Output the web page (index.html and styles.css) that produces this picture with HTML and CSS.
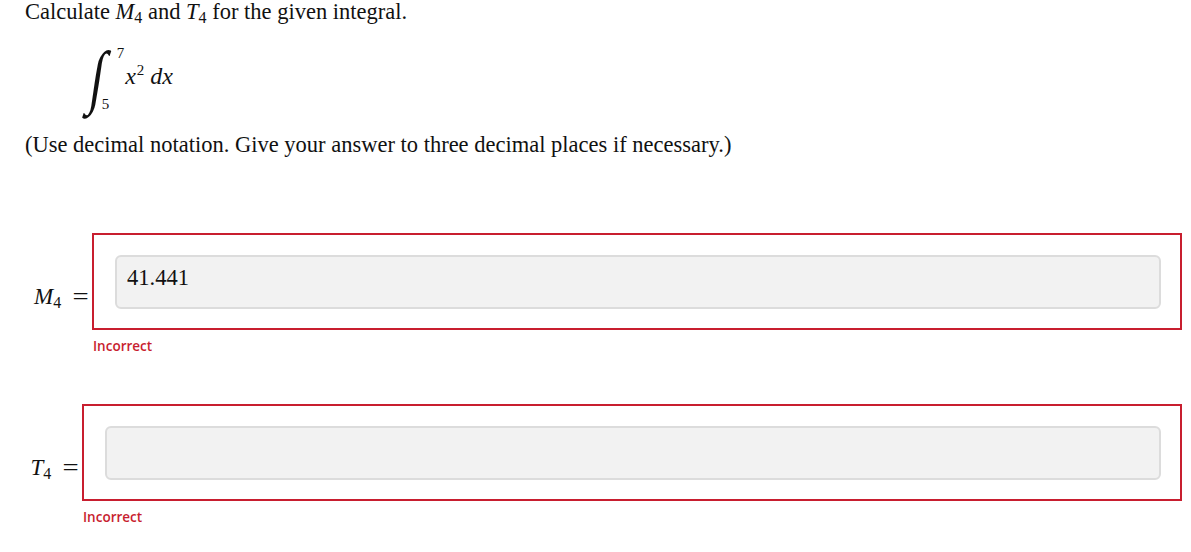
FILE: index.html
```html
<!DOCTYPE html>
<html lang="en">
<head>
    <meta charset="UTF-8">
    <title>Midpoint and Trapezoid Rule</title>
    <link rel="stylesheet" href="styles.css">
</head>
<body>
    <div class="question">
        <p class="prompt">Calculate <i>M</i><sub>4</sub> and <i>T</i><sub>4</sub> for the given integral.</p>
        <div class="integral">
            <span class="int-sign">&int;</span>
            <span class="limits">
                <span class="upper">7</span>
                <span class="lower">5</span>
            </span>
            <span class="integrand"><i>x</i><sup>2</sup> <i>dx</i></span>
        </div>
        <p class="note">(Use decimal notation. Give your answer to three decimal places if necessary.)</p>

        <div class="answer-row">
            <div class="answer-label m-label"><i>M</i><sub>4</sub> <span class="eq">=</span></div>
            <div class="answer-field">
                <div class="answer-box">
                    <input type="text" class="answer-input" value="41.441">
                </div>
                <div class="feedback">Incorrect</div>
            </div>
        </div>

        <div class="answer-row second">
            <div class="answer-label t-label"><i>T</i><sub>4</sub> <span class="eq">=</span></div>
            <div class="answer-field">
                <div class="answer-box">
                    <input type="text" class="answer-input" value="">
                </div>
                <div class="feedback">Incorrect</div>
            </div>
        </div>
    </div>
</body>
</html>
```

FILE: styles.css
```css
body {
    margin: 0;
    padding: 0 9px 0 25px;
    font-family: "Liberation Serif", "Times New Roman", serif;
    font-size: 22.5px;
    color: #111;
    background: #fff;
}
.prompt {
    margin: 0;
    line-height: 24px;
}
sub {
    font-size: 16px;
    vertical-align: -4px;
    line-height: 0;
}
sup {
    font-size: 15px;
    vertical-align: 9px;
    line-height: 0;
}
.integral {
    display: flex;
    align-items: center;
    margin: 20px 0 0 66px;
    height: 70px;
}
.int-sign {
    font-family: "Liberation Serif", serif;
    font-size: 50px;
    display: inline-block;
    transform: translateY(-3px) scaleY(1.4) skewX(-12deg);
    line-height: 1;
}
.limits {
    display: flex;
    flex-direction: column;
    justify-content: space-between;
    height: 68px;
    font-family: "Liberation Serif", serif;
    font-size: 15px;
    margin-left: -3px;
}
.limits .upper {
    margin-left: 15px;
}
.integrand {
    font-family: "Liberation Serif", serif;
    font-size: 24px;
    margin-left: 1px;
    padding-bottom: 6px;
}
.integrand i + sup {
    margin-left: 1px;
}
.note {
    margin: 18px 0 0;
    line-height: 26px;
}
.answer-row {
    display: flex;
    margin-top: 75px;
}
.answer-row.second {
    margin-top: 49px;
}
.answer-label {
    box-sizing: border-box;
    padding-top: 51px;
    padding-right: 5px;
    text-align: right;
    white-space: nowrap;
    font-size: 23px;
}
.m-label {
    width: 67px;
}
.t-label {
    width: 57px;
}
.answer-label sub {
    font-size: 16px;
}
.eq {
    display: inline-block;
    margin-left: 7px;
    transform: scaleX(1.25);
}
.answer-field {
    flex: 1;
}
.answer-box {
    border: 2px solid #c81e2f;
    padding: 20px 19px 19px 21px;
}
.answer-input {
    display: block;
    width: 100%;
    box-sizing: border-box;
    height: 54px;
    border: 2px solid #dcdcdc;
    border-radius: 6px;
    background: #f2f2f2;
    padding: 0 10px 8px;
    font-family: "Liberation Serif", "Times New Roman", serif;
    font-size: 22.5px;
    color: #111;
}
.feedback {
    margin-top: 7px;
    margin-left: 1px;
    font-family: "Open Sans", sans-serif;
    font-weight: 600;
    font-size: 13.5px;
    color: #c81e2f;
}
```
